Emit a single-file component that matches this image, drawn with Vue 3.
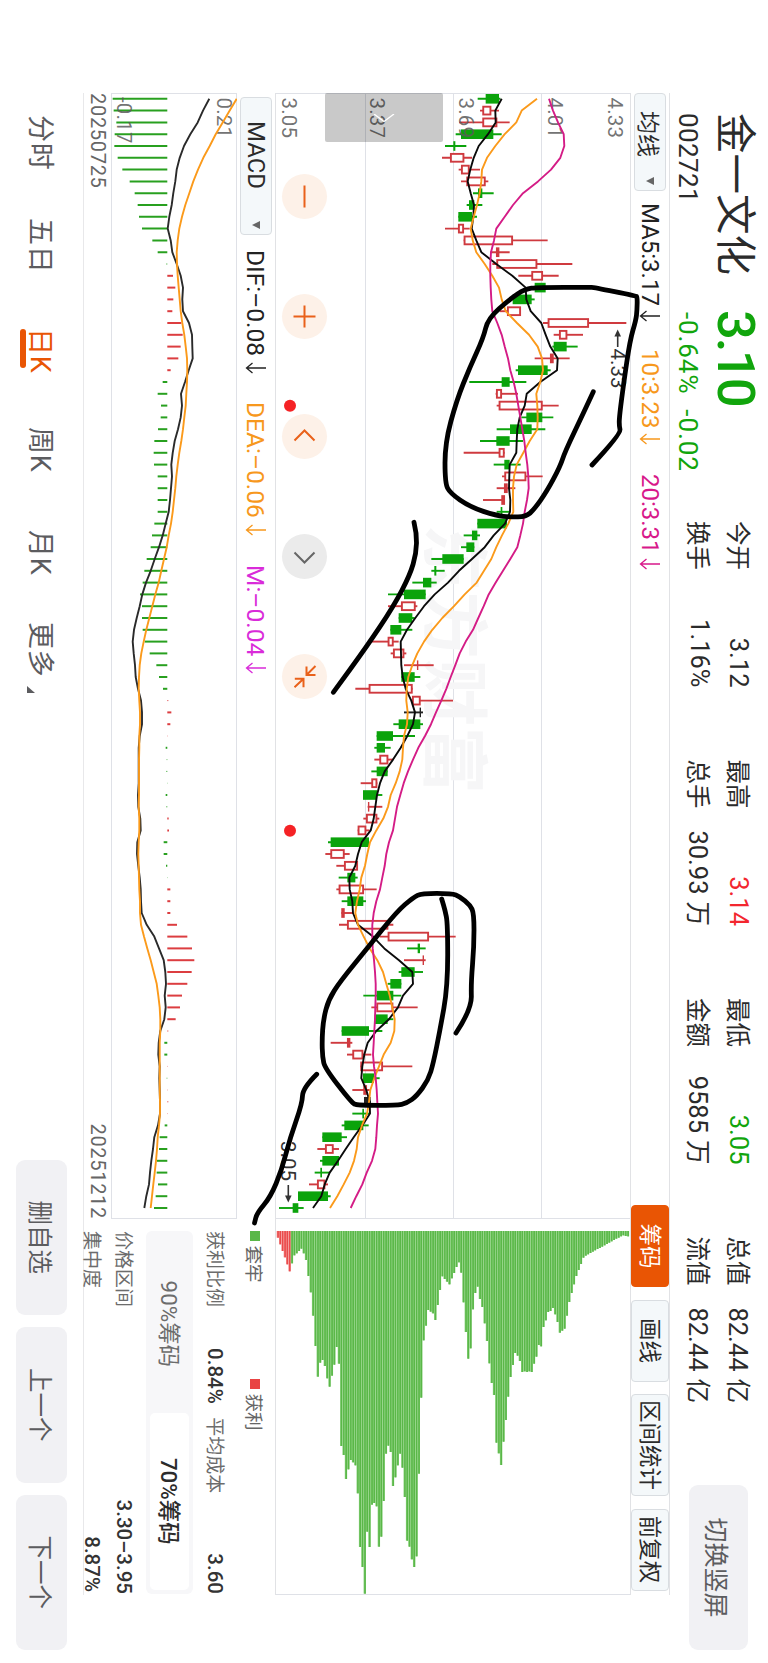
<script setup>
// 横屏K线页：整屏按 1663x768 排版，再顺时针旋转 90 度显示。
const STEP = 11.8
const X0 = 5.8

const stats = [
  [{ label: '今开', value: '3.12' }, { label: '换手', value: '1.16%' }],
  [{ label: '最高', value: '3.14', tone: 'up' }, { label: '总手', value: '30.93', unit: '万' }],
  [{ label: '最低', value: '3.05', tone: 'down' }, { label: '金额', value: '9585', unit: '万' }],
  [{ label: '总值', value: '82.44', unit: '亿' }, { label: '流值', value: '82.44', unit: '亿' }],
]

const maList = [
  { text: 'MA5:3.17', cls: 'ma5' },
  { text: '10:3.23', cls: 'ma10' },
  { text: '20:3.31', cls: 'ma20' },
]
const macdList = [
  { text: 'DIF:–0.08', cls: 'dif' },
  { text: 'DEA:–0.06', cls: 'dea' },
  { text: 'M:–0.04', cls: 'macd-m' },
]
const tools = [
  { text: '筹码', cls: 'tool--on' },
  { text: '画线' },
  { text: '区间统计', cls: 'tool--wide' },
  { text: '前复权' },
]
const controls = [
  { d: 'M-11 0H11' },
  { d: 'M-11 0H11M0 -11V11' },
  { d: 'M4 -10L-6 0L4 10' },
  { d: 'M-4 -10L6 0L-4 10', off: true },
  { d: 'M-10.5 -11L-1.5 -2M-10 -2H-1.5V-11M10.7 10L2.3 1M2.3 9.7V1H10.7' },
]
const priceLabels = [
  { text: '3.05', y: 347.8 },
  { text: '3.37', y: 259.6 },
  { text: '3.69', y: 171.2 },
  { text: '4.01', y: 82.2 },
  { text: '4.33', y: 21.8 },
]
const tabs = ['分时', '五日', '日K', '周K', '月K', '更多']

// 类型, 影线低, 实体低, 实体高, 影线高（1/3 像素单位）
const candles = `g 624 648 688 692|r 631 638 665 688|r 568 638 683 720|g 558 574 671 696|g 526 551 557 590
r 517 541 584 607|r 567 574 600 631|r 574 590 648 656|g 610 625 638 672|g 591 598 614 638
g 566 566 607 622|r 526 565 583 600|r 582 582 730 834|r 662 679 689 720|r 668 680 803 908
r 746 785 820 867|g 795 795 828 828|g 729 729 786 795|r 690 712 754 754|r 820 834 958 1070
r 852 868 893 940|g 848 852 891 924|r 795 841 852 900|g 738 745 834 843|g 599 696 720 770
r 678 679 697 745|r 681 687 819 867|g 755 770 818 851|g 681 721 786 827|g 631 680 720 760
r 582 687 705 705|g 672 704 720 753|r 697 704 770 819|r 681 703 714 737|r 640 695 706 706
g 681 693 698 720|g 623 623 712 712|g 582 607 623 631|g 574 590 614 614|g 485 518 582 582
g 485 494 500 525|g 428 460 485 501|g 355 403 468 468|r 355 394 438 443|g 387 387 428 435
g 362 362 395 428|r 305 354 372 387|r 363 370 404 410|r 403 442 446 492|g 395 395 435 452
r 257 297 429 429|r 425 427 453 550|k 403 450 454 460|g 371 387 452 460|g 321 321 370 436
g 314 321 346 363|r 314 329 356 370|g 305 321 354 354|r 273 305 323 323|g 280 280 322 338
r 294 295 299 338|r 281 289 323 329|r 264 264 290 300|g 175 183 298 298|r 167 182 225 240
r 200 223 265 265|g 207 233 257 264|r 200 207 283 321|g 216 233 281 289|r 215 215 225 250
r 208 232 356 371|r 330 354 478 558|g 412 444 451 468|r 403 459 463 468|g 387 395 435 460
g 354 362 395 395|g 281 321 371 395|r 305 320 371 444|g 315 315 354 371|g 216 216 298 338
r 183 232 242 248|r 232 248 281 305|r 272 272 340 428|g 280 280 313 330|r 248 281 292 300
k 283 283 303 303|g 248 278 283 300|g 216 224 281 297|g 158 158 216 232|r 143 166 192 208
g 151 158 208 208|g 135 152 157 180|r 118 142 167 175|g 85 85 175 183|g 28 69 86 102`
  .split(/[|\n]/)
  .map((row, i) => {
    const [type, lo, b0, b1, hi] = row.trim().split(' ')
    const y = (v) => (1081 - v) / 3
    const hollow = type === 'r' && b1 - b0 > 6
    const inset = hollow ? 0.9 : 0
    return {
      type,
      hollow,
      x: X0 + i * STEP,
      top: y(hi),
      bottom: y(lo),
      bodyTop: y(b1) + inset,
      bodyH: Math.max((b1 - b0) / 3 - inset * 2, 1.4),
      inset,
    }
  })

const ma5 = [696, 677, 678, 655, 627, 612, 602, 594, 603, 613, 611, 606, 620, 635, 680, 728, 768, 770, 783, 815, 828, 842, 864, 862, 812, 771, 765, 750, 743, 741, 740, 720, 719, 718, 722, 721, 706, 672, 645, 607, 568, 535, 495, 463, 437, 412, 393, 394, 395, 399, 408, 425, 436, 430, 413, 393, 370, 345, 331, 322, 317, 312, 303, 276, 265, 257, 239, 240, 248, 250, 265, 310, 344, 388, 428, 430, 400, 385, 358, 320, 294, 284, 278, 275, 290, 300, 301, 278, 252, 228, 205, 180, 165, 155, 130]
const ma10 = [802, 756, 740, 705, 677, 652, 637, 635, 630, 622, 612, 603, 609, 620, 645, 668, 688, 696, 708, 742, 778, 804, 817, 820, 812, 800, 803, 804, 803, 780, 761, 741, 733, 730, 730, 731, 716, 697, 680, 665, 643, 621, 585, 553, 518, 488, 463, 443, 428, 416, 411, 410, 414, 412, 403, 400, 398, 390, 378, 363, 355, 341, 320, 301, 293, 286, 275, 270, 262, 257, 265, 282, 300, 323, 340, 350, 360, 368, 375, 374, 363, 342, 328, 314, 302, 298, 292, 277, 265, 261, 253, 240, 222, 203, 181]
const ma20 = [838, 850, 865, 882, 884, 872, 844, 805, 760, 730, 705, 680, 673, 664, 662, 662, 663, 665, 668, 683, 696, 705, 715, 722, 732, 740, 746, 752, 758, 764, 768, 773, 776, 777, 772, 765, 760, 752, 743, 722, 700, 678, 657, 642, 626, 610, 588, 570, 557, 543, 530, 515, 499, 484, 466, 446, 430, 415, 402, 392, 382, 376, 370, 358, 350, 345, 338, 331, 320, 312, 308, 308, 309, 313, 316, 318, 318, 317, 316, 314, 312, 310, 313, 318, 321, 323, 325, 322, 320, 317, 307, 291, 278, 260, 243]

const hist = [339, 342, 350, 345, 344, 354, 368, 390, 405, 414, 418, 427, 458, 474, 500, 520, 527, 521, 518, 545, 549, 543, 536, 513, 489, 474, 484, 483, 475, 464, 462, 463, 474, 474, 474, 474, 464, 457, 453, 441, 434, 429, 421, 427, 427, 429, 435, 450, 470, 478, 490, 506, 515, 512, 504, 498, 501, 500, 502, 498, 500, 507, 508, 492, 492, 499, 502, 512, 512, 512, 532, 563, 577, 584, 576, 563, 547, 541, 528, 506, 494, 494, 504, 501, 504, 506, 504, 495, 480, 478, 472, 471, 475, 468, 463]
const dif = [629, 610, 594, 572, 553, 540, 531, 527, 521, 516, 509, 504, 513, 518, 531, 543, 550, 548, 550, 568, 577, 578, 579, 567, 556, 544, 547, 543, 535, 525, 519, 515, 517, 514, 511, 507, 498, 489, 478, 465, 453, 439, 428, 420, 411, 403, 399, 402, 406, 408, 415, 424, 427, 427, 420, 417, 417, 417, 417, 415, 416, 422, 423, 413, 412, 416, 420, 423, 424, 426, 441, 464, 478, 492, 497, 499, 495, 498, 494, 482, 477, 476, 480, 479, 480, 481, 481, 475, 464, 460, 455, 451, 448, 440, 434]
const dea = [711, 690, 669, 648, 630, 611, 595, 581, 569, 557, 547, 539, 534, 531, 532, 534, 537, 540, 543, 548, 554, 558, 562, 563, 562, 560, 558, 554, 550, 545, 539, 534, 530, 527, 523, 519, 514, 507, 501, 493, 485, 477, 467, 458, 449, 440, 432, 425, 420, 418, 417, 419, 421, 421, 419, 419, 418, 418, 418, 418, 417, 419, 419, 417, 416, 417, 418, 419, 421, 421, 424, 433, 443, 453, 462, 471, 476, 480, 482, 482, 480, 480, 480, 480, 480, 481, 481, 478, 474, 472, 469, 465, 461, 457, 453]

// 筹码分布，自低价到高价
const chips = [83, 103, 123, 142, 163, 184, 160, 136, 130, 123, 116, 130, 150, 198, 247, 317, 408, 500, 458, 450, 468, 505, 530, 497, 464, 411, 461, 708, 735, 807, 778, 750, 757, 766, 850, 1011, 1071, 1151, 965, 1011, 884, 879, 889, 1010, 980, 873, 731, 707, 726, 828, 802, 766, 731, 773, 861, 992, 1010, 1048, 1071, 1039, 791, 563, 391, 347, 300, 305, 310, 330, 285, 240, 199, 207, 215, 223, 205, 189, 171, 157, 188, 277, 366, 446, 415, 298, 249, 230, 267, 291, 340, 393, 460, 519, 555, 698, 730, 765, 695, 630, 560, 501, 465, 429, 437, 453, 486, 484, 486, 484, 486, 461, 440, 405, 409, 351, 331, 306, 303, 294, 313, 336, 368, 362, 356, 317, 276, 249, 223, 198, 180, 162, 143, 137, 133, 129, 125, 121, 117, 114, 110, 106, 102, 98, 94, 90, 86, 83, 79, 76, 78, 79]

const line = (list, top) => list.map((v, i) => `${(X0 + i * STEP).toFixed(1)},${((top - v) / 3).toFixed(1)}`).join(' ')

// 手绘笔迹，用中点二次曲线平滑
const strokes = [
  [592, 465, 621, 434, 619, 425, 619.7, 414, 623.3, 386, 630, 340, 636, 320, 637, 310, 637.3, 297, 636, 296, 593.3, 287.3, 590, 287.3, 538, 287.3, 525, 289, 510, 299, 488, 318.5, 483.3, 338, 470, 367, 456.7, 400, 445, 443, 445, 483, 450, 493, 470, 507, 496.7, 515.7, 510, 517, 526, 516.7, 534, 509.5, 546.7, 491.7, 560, 466.7, 565, 451.7, 583.3, 413.3, 593.3, 391.7],
  [414, 522.3, 416.7, 533, 416.3, 553, 410, 575, 393.3, 606.7, 366.7, 646.7, 333.3, 692.3],
  [456, 1033, 471.7, 1009.3, 471, 983, 474, 946.7, 474, 913.3, 470, 905, 460, 896.7, 451.7, 893.3, 421.7, 893.3, 413.3, 897.3, 396.7, 911.7, 370, 945, 340, 981.7, 328.3, 1000, 323.3, 1020, 322, 1040, 322.5, 1057, 325, 1068.3, 351.7, 1102.7, 357, 1105.3, 396.7, 1105.3, 406.7, 1103.3, 416.7, 1096, 428.3, 1080, 433.3, 1063.3, 440, 1030, 447.7, 986.7, 447.7, 923.3, 445, 910, 441.7, 899],
  [316.7, 1074.3, 302.7, 1088.3, 302.3, 1103.3, 290, 1138.3, 281.7, 1170, 270.5, 1197, 257, 1213, 254.5, 1223],
].map((p) => {
  let d = `M${p[0]} ${p[1]}`
  for (let i = 2; i < p.length - 2; i += 2) {
    d += `Q${p[i]} ${p[i + 1]} ${(p[i] + p[i + 2]) / 2} ${(p[i + 1] + p[i + 3]) / 2}`
  }
  return d + `L${p[p.length - 2]} ${p[p.length - 1]}`
})
</script>

<template>
  <div class="viewport">
    <div class="screen">
      <header class="header">
        <div class="identity">
          <span class="name">金一文化</span>
          <span class="price">3.10</span>
          <span class="code">002721</span>
          <span class="change"><i>-0.64%</i><i>-0.02</i></span>
        </div>
        <div class="stats">
          <div v-for="(col, i) in stats" :key="i" class="stats__col">
            <div v-for="s in col" :key="s.label" class="stat">
              <span class="stat__label">{{ s.label }}</span>
              <span class="stat__value" :class="s.tone">{{ s.value }}<b v-if="s.unit">{{ s.unit }}</b></span>
            </div>
          </div>
        </div>
        <button class="switch">切换竖屏</button>
      </header>

      <main class="main">
        <div class="row-ma">
          <div class="picker picker--ma"><span>均线</span><i class="caret"></i></div>
          <span v-for="m in maList" :key="m.text" class="ind" :class="m.cls">
            {{ m.text }}<svg class="down-arrow" viewBox="0 0 12 22"><path d="M6 1V20M1 14.5L6 20.5L11 14.5" /></svg>
          </span>
          <div class="tools">
            <span v-for="t in tools" :key="t.text" class="tool" :class="t.cls">{{ t.text }}</span>
          </div>
        </div>

        <div class="row-chart">
          <div class="kline">
            <svg class="kline__svg" width="1126" height="354" viewBox="0 0 1126 354">
              <path class="grid" d="M0.5 0V354M0 88.5H1126M0 176.5H1126M0 264.5H1126M1125.5 0V354" />
              <text class="watermark" x="431" y="200">东方财富</text>
              <g v-for="(c, i) in candles" :key="i" :class="'candle candle--' + c.type">
                <line :x1="c.x" :x2="c.x" :y1="c.top" :y2="c.bottom" />
                <rect
                  :class="{ hollow: c.hollow }"
                  :x="c.x - 4.8 + c.inset"
                  :y="c.bodyTop"
                  :width="9.6 - c.inset * 2"
                  :height="c.bodyH"
                />
              </g>
              <text v-for="p in priceLabels" :key="p.text" class="axis" x="4.5" :y="p.y">{{ p.text }}</text>
              <polyline class="line line--ma5" :points="line(ma5, 1081)" />
              <polyline class="line line--ma10" :points="line(ma10, 1081)" />
              <polyline class="line line--ma20" :points="line(ma20, 1081)" />
              <text class="mark" x="255.5" y="18.8">4.33</text>
              <path class="mark-arrow" d="M254 12.3H239" />
              <path class="mark-head" d="M236.5 12.3L243.5 9V15.6Z" />
              <text class="mark" x="1048" y="349.2">3.05</text>
              <path class="mark-arrow" d="M1092 341.7H1106" />
              <path class="mark-head" d="M1109.5 341.7L1102.5 338.4V345Z" />
              <circle class="dot" cx="312.7" cy="340" r="6" />
              <circle class="dot" cx="737.7" cy="340" r="6" />
            </svg>
            <div class="drawer">
              <svg width="8" height="22" viewBox="0 0 8 22"><path d="M0 1L7.5 11L0 21" /></svg>
            </div>
            <div class="controls">
              <span v-for="c in controls" :key="c.d" class="ctl" :class="{ 'ctl--off': c.off }">
                <svg width="45" height="45" viewBox="-22.5 -22.5 45 45"><path :d="c.d" /></svg>
              </span>
            </div>
          </div>
          <svg class="chips" width="376" height="354" viewBox="0 0 376 354">
            <path class="grid" d="M375.5 0V354" />
            <g v-for="(v, i) in chips" :key="i" :class="i < 6 ? 'chip chip--win' : 'chip'">
              <rect class="chip__bg" x="12" :y="351 - i * 2.35" :width="(v - 63) / 3" height="2.35" />
              <rect x="12" :y="351.2 - i * 2.35" :width="(v - 63) / 3" height="1.5" />
            </g>
          </svg>
        </div>

        <div class="row-bottom">
          <section class="macd">
            <div class="macd__head">
              <div class="picker picker--macd"><span>MACD</span><i class="caret"></i></div>
              <span v-for="m in macdList" :key="m.text" class="ind" :class="m.cls">
                {{ m.text }}<svg class="down-arrow" viewBox="0 0 12 22"><path d="M6 1V20M1 14.5L6 20.5L11 14.5" /></svg>
              </span>
            </div>
            <svg class="macd__svg" width="1126" height="126" viewBox="0 0 1126 126">
              <path class="grid" d="M0 .5H1126M0 125.5H1126M.5 0V126M1125.5 0V126" />
              <line
                v-for="(v, i) in hist"
                :key="i"
                :class="['bar', v > 503 ? 'bar--up' : 'bar--down', { 'bar--thin': Math.abs(v - 503) < 4 }]"
                :x1="X0 + i * STEP"
                :x2="X0 + i * STEP"
                :y1="69.7"
                :y2="(712 - v) / 3"
              />
              <text class="axis" x="4.5" y="20">0.21</text>
              <text class="axis" x="4" y="120">-0.17</text>
              <polyline class="line line--dif" :points="line(dif, 712)" />
              <polyline class="line line--ma10" :points="line(dea, 712)" />
            </svg>
            <div class="dates"><span>20250725</span><span>20251212</span></div>
          </section>

          <aside class="panel">
            <div class="legend">
              <span><i class="sq sq--green"></i>套牢</span>
              <span><i class="sq sq--red"></i>获利</span>
            </div>
            <div class="kv kv--four">
              <span>获利比例</span><b>0.84%</b><span>平均成本</span><b>3.60</b>
            </div>
            <div class="segment">
              <span>90%筹码</span>
              <span class="segment__on">70%筹码</span>
            </div>
            <div class="kv"><span>价格区间</span><b>3.30–3.95</b></div>
            <div class="kv"><span>集中度</span><b class="kv__pct">8.87%</b></div>
          </aside>
        </div>
      </main>

      <footer class="footer">
        <nav class="tabs">
          <span v-for="t in tabs" :key="t" class="tab" :class="{ 'tab--on': t === '日K', 'tab--more': t === '更多' }">{{ t }}</span>
        </nav>
        <div class="actions">
          <button>删自选</button>
          <button>上一个</button>
          <button>下一个</button>
        </div>
      </footer>
    </div>

    <svg class="ink" width="768" height="1663" viewBox="0 0 768 1663">
      <path v-for="(d, i) in strokes" :key="i" :d="d" />
    </svg>
  </div>
</template>

<style>
body {
  margin: 0;
  background: #fff;
}
</style>

<style scoped>
.viewport {
  position: relative;
  width: 768px;
  height: 1663px;
  overflow: hidden;
  background: #fff;
}

.screen {
  display: flex;
  flex-direction: column;
  width: 1663px;
  height: 768px;
  transform: translateX(768px) rotate(90deg);
  transform-origin: 0 0;
  font-family: Roboto, "Noto Sans CJK SC", sans-serif;
  color: #2b2b2b;
  white-space: nowrap;
}

i,
b {
  font-style: normal;
  font-weight: inherit;
}

button {
  border: 0;
  padding: 0;
  font-family: inherit;
  background: #f1f1f4;
  color: #5c5c5f;
}

/* 顶部行情 */
.header {
  display: flex;
  flex: none;
  height: 98px;
  padding: 0 13px 0 113px;
}

.identity {
  display: grid;
  grid-template-columns: 197px 211px;
  grid-template-rows: 63px 33px;
  align-items: center;
}

.name {
  padding-top: 3px;
  font-size: 40.5px;
  line-height: 60px;
}

.price {
  font-size: 52.5px;
  line-height: 61px;
  font-weight: 500;
  letter-spacing: -2.2px;
  color: #11a50c;
  padding-top: 2px;
}

.code {
  font-size: 26px;
  letter-spacing: 0.4px;
}

.change {
  display: flex;
  gap: 15px;
  padding-left: 2px;
  font-size: 26px;
  letter-spacing: 0.9px;
  color: #11a50c;
}

.stats {
  display: flex;
  gap: 70.5px;
  padding-top: 9px;
}

.stats__col {
  width: 168px;
}

.stat {
  display: flex;
  align-items: center;
  justify-content: space-between;
  height: 39.5px;
  font-size: 25.5px;
}

.stat__label,
.stat__value b {
  font-size: 24.5px;
}

.stat__value {
  margin-right: 1.5px;
}

.stat__value b {
  margin-left: 7px;
}

.up {
  color: #f3272f;
}

.down {
  color: #11a50c;
}

.switch {
  width: 165px;
  height: 59px;
  margin: 20px 0 0 auto;
  border-radius: 9px;
  font-size: 25px;
}

/* 主区域 */
.main {
  flex: none;
  width: 1502px;
  height: 585px;
  margin-left: 93px;
  border-top: 1px solid #e1e2e5;
  border-bottom: 1px solid #e8e8ea;
}

.row-ma {
  display: flex;
  align-items: center;
  height: 38px;
  border-bottom: 1px solid #e1e2e5;
}

.picker {
  display: flex;
  align-items: center;
  justify-content: space-between;
  box-sizing: border-box;
  height: 32px;
  border: 1px solid #d9dde1;
  border-radius: 4px;
  background: #f4f8fa;
}

.picker--ma {
  width: 98px;
  padding: 0 5px 0 17px;
  margin-right: 12px;
  font-size: 23px;
}

.picker--macd {
  width: 138px;
  margin: 0 15px 0 4px;
  padding: 0 5px 0 23px;
  font-size: 24px;
}

.caret {
  border: 4.5px solid transparent;
  border-top: 8px solid #666;
  border-bottom: 0;
}

.ind {
  display: flex;
  align-items: center;
  font-size: 24.5px;
}

.down-arrow {
  width: 12px;
  height: 22px;
  margin-left: 6px;
  fill: none;
  stroke: currentColor;
  stroke-width: 1.3;
}

.ma5 {
  width: 146px;
}

.ma5,
.dif {
  color: #222;
}

.ma10 {
  width: 125px;
}

.ma10,
.dea {
  color: #f7981d;
}

.row-ma .ind {
  font-size: 24px;
}

.row-ma .down-arrow {
  margin-left: 4px;
}

.row-ma .ma20 {
  color: #d8188a;
}

.tools {
  display: flex;
  gap: 12.5px;
  margin-left: auto;
  margin-right: 4.5px;
}

.tool {
  box-sizing: border-box;
  width: 82px;
  height: 38px;
  border: 1px solid #d9dde1;
  border-radius: 4px;
  background: #f4f8fa;
  font-size: 22.5px;
  line-height: 37px;
  text-align: center;
}

.tool--wide {
  width: 102px;
}

.tool--on {
  border-color: #e95504;
  background: #e95504;
  color: #fff;
}

.row-chart {
  display: flex;
  height: 354px;
  border-bottom: 1px solid #e1e2e5;
}

.kline {
  position: relative;
  width: 1126px;
}

svg {
  display: block;
}

.grid {
  fill: none;
  stroke: #dfe1e7;
}

.watermark {
  font-size: 67.5px;
  font-weight: 700;
  fill: #f6f6f7;
}

.candle line {
  stroke-width: 1.9;
}

.candle--g line {
  stroke: #0ba30b;
}

.candle--g rect {
  fill: #0ba30b;
}

.candle--r line,
.candle--r .hollow {
  stroke: #cf3a3f;
}

.candle--r rect {
  fill: #cf3a3f;
}

.candle--r .hollow {
  fill: #fff;
  stroke-width: 1.9;
}

.candle--k line {
  stroke: #222;
}

.candle--k rect {
  fill: #222;
}

.axis {
  font-size: 20.5px;
  letter-spacing: 0.2px;
  fill: #5b5b5b;
  fill-opacity: 0.85;
}

.line {
  fill: none;
  stroke-width: 1.9;
  stroke-linejoin: round;
}

.line--ma5 {
  stroke: #0a0a0a;
}

.line--dif {
  stroke: #2a2a2a;
}

.line--ma10 {
  stroke: #fb9a1b;
}

.line--ma20 {
  stroke: #d41c86;
}

.mark {
  font-size: 20.5px;
  fill: #333;
}

.mark-arrow {
  stroke: #333;
  stroke-width: 1.6;
}

.mark-head {
  fill: #333;
}

.dot {
  fill: #f52225;
}

.drawer {
  position: absolute;
  left: 0;
  top: 187px;
  display: flex;
  align-items: center;
  justify-content: center;
  width: 49px;
  height: 118px;
  border-radius: 2px;
  background: rgba(0, 0, 0, 0.21);
}

.drawer svg {
  fill: none;
  stroke: #fff;
  stroke-width: 1.3;
}

.controls {
  position: absolute;
  left: 80.5px;
  top: 302.5px;
  display: flex;
  gap: 75.2px;
}

.ctl {
  width: 45px;
  height: 45px;
  border-radius: 50%;
  background: #fdf1e8;
}

.ctl path {
  fill: none;
  stroke: #e9611a;
  stroke-width: 2;
}

.ctl--off {
  background: #ebebeb;
}

.ctl--off path {
  stroke: #666;
}

.chips rect {
  fill: #5ab748;
}

.chips .chip__bg {
  fill: #86cf78;
}

.chips .chip--win rect {
  fill: #ea4a4a;
}

.chips .chip--win .chip__bg {
  fill: #f28a8a;
}

.row-bottom {
  display: flex;
}

.macd {
  width: 1126px;
}

.macd__head {
  display: flex;
  align-items: center;
  height: 38px;
}

.dif {
  width: 152px;
}

.dea {
  width: 163px;
}

.macd-m {
  color: #d92bd9;
}

.bar {
  stroke-width: 2;
}

.bar--up {
  stroke: #dc3d40;
}

.bar--down {
  stroke: #28a01f;
}

.bar--thin {
  stroke-width: 1;
}

.dates {
  display: flex;
  justify-content: space-between;
  height: 28px;
  font-size: 20px;
  line-height: 27px;
  letter-spacing: 0.7px;
  color: #666;
}

/* 筹码面板 */
.panel {
  width: 363px;
  padding-left: 12px;
}

.legend {
  display: flex;
  height: 40px;
  padding-bottom: 1px;
  box-sizing: border-box;
  align-items: center;
  font-size: 18.5px;
  color: #666;
}

.legend span {
  display: flex;
  align-items: center;
  width: 148px;
}

.sq {
  width: 10px;
  height: 10px;
  margin-right: 4.5px;
}

.sq--green {
  background: #5ab748;
}

.sq--red {
  background: #e94444;
}

.kv {
  display: flex;
  justify-content: space-between;
  align-items: center;
  height: 32px;
  font-size: 19px;
  color: #6c6c6c;
}

.kv span {
  padding-bottom: 3px;
}

.kv b {
  font-size: 20.5px;
  font-weight: 500;
  color: #333;
}

.kv .kv__pct {
  padding-right: 2px;
}

.kv--four {
  height: 40px;
}

.kv--four span:first-child {
  width: 117px;
}

.kv--four b:nth-child(2) {
  width: 69px;
}

.kv--four span:nth-child(3) {
  width: 136px;
}

.segment {
  display: flex;
  box-sizing: border-box;
  height: 47px;
  margin: 2px 0 6px;
  padding: 4px;
  border-radius: 6px;
  background: #f7f7f9;
}

.segment span {
  width: 178px;
  border-radius: 5px;
  font-size: 22.4px;
  line-height: 40px;
  text-align: center;
  color: #6c6c6c;
}

.segment .segment__on {
  background: #fff;
  color: #2b2b2b;
  font-weight: 500;
}

/* 底部 */
.footer {
  display: flex;
  justify-content: space-between;
  flex: 1;
  padding: 16px 13px 0 115px;
}

.tabs {
  display: flex;
  height: 51px;
  font-size: 27px;
  line-height: 54px;
  letter-spacing: 0.8px;
  color: #5c5c5f;
}

.tab {
  position: relative;
  width: 103px;
}

.tab:nth-child(2) {
  width: 110px;
}

.tab:nth-child(3) {
  width: 99px;
}

.tab:nth-child(5) {
  width: 92px;
}

.tab--on {
  color: #e95504;
}

.tab--on::after {
  content: "";
  position: absolute;
  left: 1px;
  top: 41px;
  width: 39px;
  height: 6px;
  border-radius: 3px;
  background: #e95504;
}

.tab--more::after {
  content: "";
  position: absolute;
  left: 64px;
  top: 32px;
  border-left: 7px solid transparent;
  border-bottom: 8px solid #5c5c5f;
}

.actions {
  display: flex;
  gap: 12px;
}

.actions button {
  width: 155.5px;
  height: 51px;
  border-radius: 9px;
  font-size: 24.5px;
}

.ink {
  position: absolute;
  left: 0;
  top: 0;
}

.ink path {
  fill: none;
  stroke: #000;
  stroke-width: 4.8;
  stroke-linecap: round;
  stroke-linejoin: round;
}
</style>
